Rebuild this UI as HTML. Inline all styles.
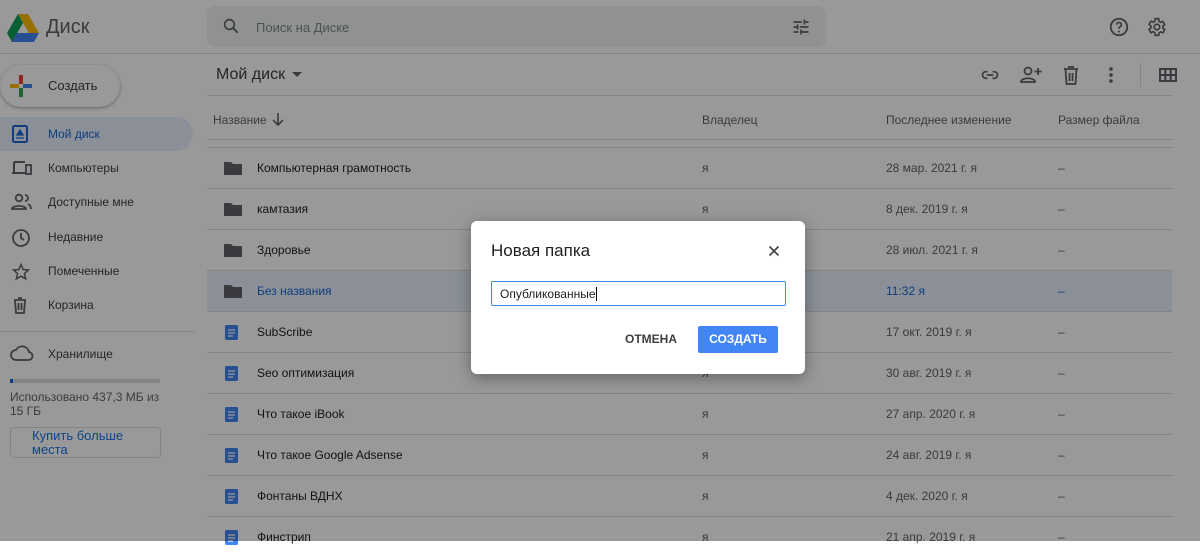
<!DOCTYPE html>
<html><head><meta charset="utf-8"><style>
*{box-sizing:border-box;margin:0;padding:0}
body{width:1200px;height:541px;overflow:hidden;background:#fff;font-family:"Liberation Sans",Arial,sans-serif;color:#3c4043;position:relative;font-size:12px}
.abs{position:absolute}
.hdr{left:0;top:0;width:1200px;height:54px;border-bottom:1px solid #dadce0}
.search{left:207px;top:6px;width:619px;height:41px;background:#f1f3f4;border-radius:8px}
.nav{left:0;width:193px;height:34px;line-height:34px;font-size:12px;color:#3c4043}
.nav span{position:absolute;left:48px}
.nav svg{position:absolute;left:11px;top:8px}
.row{left:207px;width:965px;height:41px;border-top:1px solid #dadce0;font-size:12px}
.row .n{position:absolute;left:50px;top:13px;color:#202124}
.row .o{position:absolute;left:495px;top:13px;color:#5f6368}
.row .m{position:absolute;left:679px;top:13px;color:#5f6368}
.row .s{position:absolute;left:851px;top:13px;color:#5f6368}
.row svg{position:absolute;left:17px;top:13px}
.ov{left:0;top:0;width:1200px;height:541px;background:rgba(0,0,0,0.4)}
</style></head><body>
<div class="abs hdr"></div>
<svg class="abs" style="left:7px;top:14px" width="32" height="28" viewBox="0 0 32 28"><path d="M11 0h10l11 19h-10z" fill="#fbbc04"/><path d="M11 0L0 19l5 9 11-19z" fill="#0f9d58" transform="translate(0,-0)"/><path d="M5 28h22l5-9H10z" fill="#4285f4"/><path d="M11 0l5 9-6 10H0z" fill="#0f9d58" opacity="0"/></svg>
<div class="abs" style="left:46px;top:16px;font-size:20px;color:#5f6368">Диск</div>
<div class="abs search"></div>
<svg class="abs" style="left:222px;top:17px" width="18" height="18" viewBox="0 0 24 24"><circle cx="10" cy="10" r="6.5" fill="none" stroke="#5f6368" stroke-width="2.2"/><path d="M15 15l6 6" stroke="#5f6368" stroke-width="2.4"/></svg>
<div class="abs" style="left:256px;top:20px;font-size:13px;color:#80868b">Поиск на Диске</div>
<svg class="abs" style="left:791px;top:17px" width="20" height="20" viewBox="0 0 24 24"><path d="M3 17v2h6v-2zm0-12v2h10V5zm10 16v-2h8v-2h-8v-2h-2v6zM7 9v2H3v2h4v2h2V9zm14 4v-2H11v2zm-6-4h2V7h4V5h-4V3h-2z" fill="#5f6368"/></svg>
<svg class="abs" style="left:1108px;top:16px" width="22" height="22" viewBox="0 0 24 24"><circle cx="12" cy="12" r="9" fill="none" stroke="#5f6368" stroke-width="2"/><path d="M9.5 9.5a2.5 2.5 0 1 1 3.5 2.3c-.7.4-1 .9-1 1.7v.5" fill="none" stroke="#5f6368" stroke-width="1.8"/><circle cx="12" cy="17" r="1.1" fill="#5f6368"/></svg>
<svg class="abs" style="left:1145px;top:16px" width="22" height="22" viewBox="0 0 24 24"><path d="M19.4 13a7.5 7.5 0 0 0 0-2l2.1-1.6-2-3.5-2.5 1a7 7 0 0 0-1.7-1L15 3h-4l-.4 2.7a7 7 0 0 0-1.7 1l-2.5-1-2 3.5L6.5 11a7.5 7.5 0 0 0 0 2l-2.1 1.6 2 3.5 2.5-1a7 7 0 0 0 1.7 1L11 21h4l.4-2.7a7 7 0 0 0 1.7-1l2.5 1 2-3.5z" fill="none" stroke="#5f6368" stroke-width="1.8"/><circle cx="13" cy="12" r="3" fill="none" stroke="#5f6368" stroke-width="1.8"/></svg>

<div class="abs" style="left:0;top:65px;width:120px;height:42px;border-radius:21px;background:#fff;box-shadow:0 1px 3px rgba(0,0,0,.35)"></div>
<svg class="abs" style="left:10px;top:75px" width="22" height="22" viewBox="0 0 22 22"><rect x="9" y="0" width="4" height="9" fill="#ea4335"/><rect x="13" y="9" width="9" height="4" fill="#4285f4"/><rect x="9" y="13" width="4" height="9" fill="#34a853"/><rect x="0" y="9" width="9" height="4" fill="#fbbc04"/></svg>
<div class="abs" style="left:48px;top:78px;font-size:13px;color:#3c4043">Создать</div>

<div class="abs" style="left:0;top:117px;width:193px;height:34px;background:#e8f0fe;border-radius:0 17px 17px 0"></div>
<div class="abs nav" style="top:117px;color:#1967d2"><svg width="18" height="18" viewBox="0 0 18 18"><rect x="2" y="1" width="14" height="16" rx="1.5" fill="none" stroke="#1967d2" stroke-width="2"/><path d="M5 13h8M9 5l-3 5h6z" stroke="#1967d2" fill="#1967d2" stroke-width="1.3"/></svg><span>Мой диск</span></div>
<div class="abs nav" style="top:151px"><svg width="22" height="18" viewBox="0 0 22 18"><path d="M3 3h11M3 3v10M1 14h13" stroke="#5f6368" stroke-width="2" fill="none"/><rect x="15" y="6" width="5" height="9" fill="none" stroke="#5f6368" stroke-width="1.8"/></svg><span>Компьютеры</span></div>
<div class="abs nav" style="top:185px"><svg width="22" height="18" viewBox="0 0 22 18"><circle cx="8" cy="5" r="3.3" fill="none" stroke="#5f6368" stroke-width="1.8"/><path d="M1 16c0-4 14-4 14 0z" fill="none" stroke="#5f6368" stroke-width="1.8"/><path d="M14 2a3 3 0 0 1 0 6M17 11c2 1 3 3 3 5" fill="none" stroke="#5f6368" stroke-width="1.8"/></svg><span>Доступные мне</span></div>
<div class="abs nav" style="top:220px"><svg width="20" height="20" viewBox="0 0 20 20"><circle cx="10" cy="10" r="8" fill="none" stroke="#5f6368" stroke-width="1.8"/><path d="M10 5v5l3 2" fill="none" stroke="#5f6368" stroke-width="1.8"/></svg><span>Недавние</span></div>
<div class="abs nav" style="top:254px"><svg width="20" height="20" viewBox="0 0 24 24"><path d="M12 3l2.6 6 6.4.6-4.9 4.3 1.5 6.3L12 17l-5.6 3.2 1.5-6.3L3 9.6 9.4 9z" fill="none" stroke="#5f6368" stroke-width="1.8"/></svg><span>Помеченные</span></div>
<div class="abs nav" style="top:288px"><svg width="18" height="18" viewBox="0 0 18 18"><path d="M3 4h12M7 2h4M4 4l1 13h8l1-13M7.5 7v7M10.5 7v7" fill="none" stroke="#5f6368" stroke-width="1.8"/></svg><span>Корзина</span></div>
<div class="abs" style="left:0;top:331px;width:195px;border-top:1px solid #dadce0"></div>
<svg class="abs" style="left:10px;top:345px" width="24" height="16" viewBox="0 0 24 16"><path d="M6 15a5 5 0 0 1 0-10 7 7 0 0 1 13 2 4 4 0 0 1-1 8z" fill="none" stroke="#5f6368" stroke-width="1.8"/></svg>
<div class="abs" style="left:48px;top:347px;color:#3c4043">Хранилище</div>
<div class="abs" style="left:10px;top:379px;width:150px;height:4px;background:#dadce0"></div>
<div class="abs" style="left:10px;top:379px;width:3px;height:4px;background:#1967d2"></div>
<div class="abs" style="left:10px;top:390px;width:150px;line-height:14px;color:#5f6368">Использовано 437,3 МБ из 15 ГБ</div>
<div class="abs" style="left:10px;top:427px;width:151px;height:31px;border:1px solid #dadce0;border-radius:4px;padding:1px 0 0 21px;line-height:14px;color:#1a73e8;font-size:13px">Купить больше места</div>

<div class="abs" style="left:216px;top:66px;font-size:16px;color:#3c4043">Мой диск</div>
<svg class="abs" style="left:292px;top:72px" width="10" height="6"><path d="M0 0h10L5 5z" fill="#5f6368"/></svg>
<svg class="abs" style="left:979px;top:65px" width="22" height="20" viewBox="0 0 24 24"><path d="M9 8H7a4 4 0 0 0 0 8h2M15 8h2a4 4 0 0 1 0 8h-2M8 12h8" fill="none" stroke="#5f6368" stroke-width="2"/></svg>
<svg class="abs" style="left:1019px;top:64px" width="24" height="22" viewBox="0 0 24 22"><circle cx="9" cy="7" r="3.5" fill="none" stroke="#5f6368" stroke-width="1.8"/><path d="M2 18c0-5 14-5 14 0z" fill="none" stroke="#5f6368" stroke-width="1.8"/><path d="M19 4v7M15.5 7.5h7" stroke="#5f6368" stroke-width="1.8"/></svg>
<svg class="abs" style="left:1062px;top:65px" width="18" height="20" viewBox="0 0 18 20"><path d="M2 4h14M6 2h6M3.5 4l1 15h9l1-15M7.5 8v8M10.5 8v8" fill="none" stroke="#5f6368" stroke-width="1.8"/></svg>
<svg class="abs" style="left:1108px;top:66px" width="6" height="18"><circle cx="3" cy="3" r="1.8" fill="#5f6368"/><circle cx="3" cy="9" r="1.8" fill="#5f6368"/><circle cx="3" cy="15" r="1.8" fill="#5f6368"/></svg>
<div class="abs" style="left:1140px;top:63px;height:24px;border-left:1px solid #dadce0"></div>
<svg class="abs" style="left:1159px;top:68px" width="18" height="14" viewBox="0 0 18 14"><path d="M1 1h16v12H1zM1 7h16M6.3 1v12M11.7 1v12" fill="none" stroke="#5f6368" stroke-width="2"/></svg>
<div class="abs" style="left:207px;top:95px;width:965px;border-top:1px solid #dadce0"></div>
<div class="abs" style="left:213px;top:113px;color:#5f6368">Название</div>
<svg class="abs" style="left:272px;top:113px" width="12" height="14" viewBox="0 0 12 14"><path d="M6 0v12M1 7l5 5 5-5" fill="none" stroke="#5f6368" stroke-width="1.6"/></svg>
<div class="abs" style="left:702px;top:113px;color:#5f6368">Владелец</div>
<div class="abs" style="left:886px;top:113px;color:#5f6368">Последнее изменение</div>
<div class="abs" style="left:1058px;top:113px;color:#5f6368">Размер файла</div>
<div class="abs" style="left:207px;top:139px;width:965px;border-top:1px solid #dadce0"></div>

<div class="abs row" style="top:147px"><svg width="18" height="14"><path d="M0 1h7l2 2h9v11H0z" fill="#5f6368"/></svg><span class="n">Компьютерная грамотность</span><span class="o">я</span><span class="m">28 мар. 2021 г. я</span><span class="s">–</span></div>
<div class="abs row" style="top:188px"><svg width="18" height="14"><path d="M0 1h7l2 2h9v11H0z" fill="#5f6368"/></svg><span class="n">камтазия</span><span class="o">я</span><span class="m">8 дек. 2019 г. я</span><span class="s">–</span></div>
<div class="abs row" style="top:229px"><svg width="18" height="14"><path d="M0 1h7l2 2h9v11H0z" fill="#5f6368"/></svg><span class="n">Здоровье</span><span class="o">я</span><span class="m">28 июл. 2021 г. я</span><span class="s">–</span></div>
<div class="abs row" style="top:270px;background:#e8f0fe"><svg width="18" height="14"><path d="M0 1h7l2 2h9v11H0z" fill="#5f6368"/></svg><span class="n" style="color:#1967d2">Без названия</span><span class="o"></span><span class="m" style="color:#1967d2">11:32 я</span><span class="s" style="color:#1967d2">–</span></div>
<div class="abs row" style="top:311px"><svg width="16" height="16"><rect x="1" y="0" width="13" height="15" rx="1.5" fill="#4285f4"/><path d="M4 5h7M4 8h7M4 11h5" stroke="#fff" stroke-width="1.3"/></svg><span class="n">SubScribe</span><span class="o">я</span><span class="m">17 окт. 2019 г. я</span><span class="s">–</span></div>
<div class="abs row" style="top:352px"><svg width="16" height="16"><rect x="1" y="0" width="13" height="15" rx="1.5" fill="#4285f4"/><path d="M4 5h7M4 8h7M4 11h5" stroke="#fff" stroke-width="1.3"/></svg><span class="n">Seo оптимизация</span><span class="o">я</span><span class="m">30 авг. 2019 г. я</span><span class="s">–</span></div>
<div class="abs row" style="top:393px"><svg width="16" height="16"><rect x="1" y="0" width="13" height="15" rx="1.5" fill="#4285f4"/><path d="M4 5h7M4 8h7M4 11h5" stroke="#fff" stroke-width="1.3"/></svg><span class="n">Что такое iBook</span><span class="o">я</span><span class="m">27 апр. 2020 г. я</span><span class="s">–</span></div>
<div class="abs row" style="top:434px"><svg width="16" height="16"><rect x="1" y="0" width="13" height="15" rx="1.5" fill="#4285f4"/><path d="M4 5h7M4 8h7M4 11h5" stroke="#fff" stroke-width="1.3"/></svg><span class="n">Что такое Google Adsense</span><span class="o">я</span><span class="m">24 авг. 2019 г. я</span><span class="s">–</span></div>
<div class="abs row" style="top:475px"><svg width="16" height="16"><rect x="1" y="0" width="13" height="15" rx="1.5" fill="#4285f4"/><path d="M4 5h7M4 8h7M4 11h5" stroke="#fff" stroke-width="1.3"/></svg><span class="n">Фонтаны ВДНХ</span><span class="o">я</span><span class="m">4 дек. 2020 г. я</span><span class="s">–</span></div>
<div class="abs row" style="top:516px"><svg width="16" height="16"><rect x="1" y="0" width="13" height="15" rx="1.5" fill="#4285f4"/><path d="M4 5h7M4 8h7M4 11h5" stroke="#fff" stroke-width="1.3"/></svg><span class="n">Финстрип</span><span class="o">я</span><span class="m">21 апр. 2019 г. я</span><span class="s">–</span></div>

<div class="abs ov"></div>

<div class="abs" style="left:471px;top:221px;width:334px;height:153px;background:#fff;border-radius:6px;box-shadow:0 4px 16px rgba(0,0,0,.35)"></div>
<div class="abs" style="left:491px;top:241px;font-size:17px;color:#202124">Новая папка</div>
<svg class="abs" style="left:768px;top:245px" width="12" height="12"><path d="M1.5 1.5l9 9M10.5 1.5l-9 9" stroke="#3c4043" stroke-width="1.6"/></svg>
<div class="abs" style="left:491px;top:281px;width:295px;height:25px;border:1px solid #4285f4;border-radius:2px;font-size:12px;padding:5px 0 0 8px;color:#202124">Опубликованные<span style="border-left:1px solid #000;margin-left:0"></span></div>
<div class="abs" style="left:625px;top:332px;font-size:12px;font-weight:bold;color:#3c4043">ОТМЕНА</div>
<div class="abs" style="left:698px;top:326px;width:80px;height:27px;background:#4285f4;border-radius:2px;color:#fff;font-weight:bold;font-size:12px;text-align:center;line-height:27px">СОЗДАТЬ</div>
</body></html>
